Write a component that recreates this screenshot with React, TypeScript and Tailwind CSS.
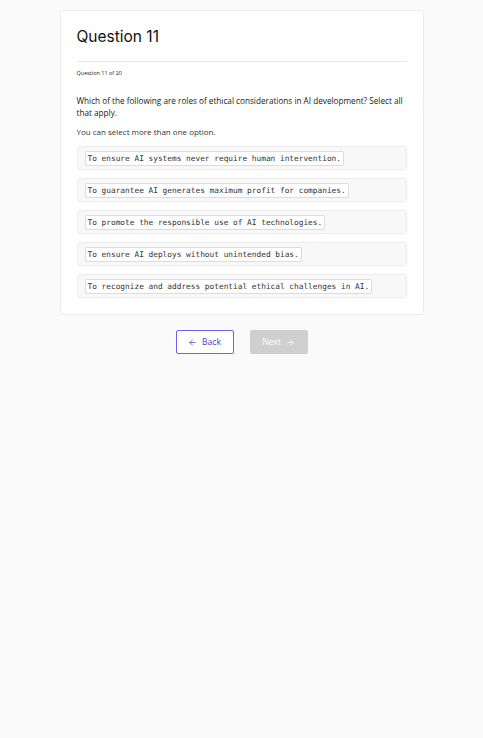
import React from "react";

const options = [
  "To ensure AI systems never require human intervention.",
  "To guarantee AI generates maximum profit for companies.",
  "To promote the responsible use of AI technologies.",
  "To ensure AI deploys without unintended bias.",
  "To recognize and address potential ethical challenges in AI.",
];

function ArrowLeft() {
  return (
    <svg width="9" height="9" viewBox="0 0 24 24" fill="none" stroke="currentColor" strokeWidth="2" strokeLinecap="round" strokeLinejoin="round">
      <path d="M19 12H5" />
      <path d="M12 19l-7-7 7-7" />
    </svg>
  );
}

function ArrowRight() {
  return (
    <svg width="9" height="9" viewBox="0 0 24 24" fill="none" stroke="currentColor" strokeWidth="2" strokeLinecap="round" strokeLinejoin="round">
      <path d="M5 12h14" />
      <path d="M12 5l7 7-7 7" />
    </svg>
  );
}

export default function App() {
  return (
    <div className="min-h-[738px] bg-[#fafafa] pt-[10px] font-['Open_Sans',sans-serif]">
      <div className="mx-auto w-[364px] rounded-[4px] border border-[#ececec] bg-white px-4 pb-[16px] pt-[16px]">
        <h1 className="font-['Inter',sans-serif] text-[15.5px] leading-[20px] text-[#111]">Question 11</h1>
        <div className="mt-[14px] border-t border-[#e8e8e8]" />
        <p className="mt-[7px] text-[5.5px] leading-[8px] text-[#222]">Question 11 of 20</p>
        <p className="mt-[18px] text-[8.2px] leading-[12px] text-[#1a1a1a]">
          Which of the following are roles of ethical considerations in AI development? Select all that apply.
        </p>
        <p className="mt-[7px] text-[8px] leading-[12px] text-[#333]">You can select more than one option.</p>
        <div className="mt-[8px] flex flex-col gap-[8px]">
          {options.map((o) => (
            <div key={o} className="flex h-[24px] items-center rounded-[3px] border border-[#ececec] bg-[#f8f8f8] px-[7px]">
              <span className="rounded-[2px] border border-[#dcdcdc] bg-white px-[2px] font-['DejaVu_Sans_Mono',monospace] text-[7.8px] leading-[13px] text-[#333]">
                {o}
              </span>
            </div>
          ))}
        </div>
      </div>
      <div className="mt-[15px] flex justify-center gap-[16px]">
        <button className="flex h-[24px] w-[58px] items-center justify-center gap-[5px] rounded-[2px] border border-[#6b63e8] bg-white text-[8.5px] font-medium text-[#4a42c8]">
          <ArrowLeft />
          <span>Back</span>
        </button>
        <button className="flex h-[24px] w-[58px] items-center justify-center gap-[5px] rounded-[2px] bg-[#cfcfcf] text-[8.5px] font-medium text-white">
          <span>Next</span>
          <ArrowRight />
        </button>
      </div>
    </div>
  );
}
